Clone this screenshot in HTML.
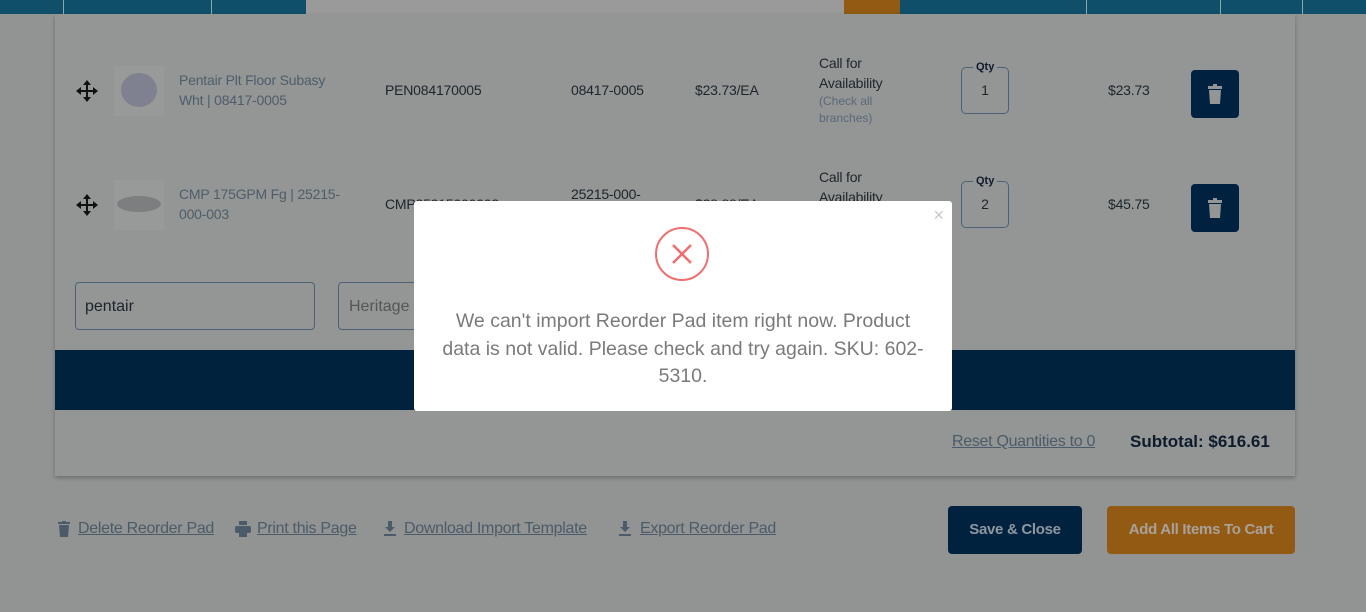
<!DOCTYPE html>
<html><head><meta charset="utf-8"><style>
*{box-sizing:border-box;margin:0;padding:0}
body{width:1366px;height:612px;overflow:hidden;background:#929493;font-family:"Liberation Sans",sans-serif;position:relative;color:#1f2a33}
.a{position:absolute}
.bar{top:0;height:14px}
.card{left:55px;top:14px;width:1240px;height:462px;background:#949695;box-shadow:0 2px 4px rgba(0,0,0,.25)}
.t{font-size:14px;color:#1c252c;letter-spacing:-.2px}
.lnk{font-size:14px;color:#4e5d6b;line-height:20px;letter-spacing:-.2px}
.sm{font-size:12px;color:#5a6878}
.qty{width:48px;height:47px;border:1px solid #4d6176;border-radius:5px;text-align:center;font-size:14px;line-height:44px;color:#1c252c}
.qty span{position:absolute;top:-8px;left:11px;background:#949695;padding:0 3px;font-size:11px;font-weight:bold;line-height:14px;color:#0d1b2b}
.del{width:48px;height:48px;background:#002240;border-radius:4px}
.thumb{width:50px;height:50px;background:#989a99}
.ul{text-decoration:underline;color:#4c5b69;font-size:16px;letter-spacing:-.3px}
</style></head><body>
<div class="a bar" style="left:0;width:306px;background:#0f4f6a"></div>
<div class="a bar" style="left:63px;width:1px;background:#8aa"></div>
<div class="a bar" style="left:211px;width:1px;background:#8aa"></div>
<div class="a bar" style="left:306px;width:538px;background:#9a9a9a"></div>
<div class="a bar" style="left:844px;width:56px;background:#935a14"></div>
<div class="a bar" style="left:900px;width:466px;background:#0f4f6a"></div>
<div class="a bar" style="left:1086px;width:1px;background:#8aa"></div>
<div class="a bar" style="left:1220px;width:1px;background:#8aa"></div>
<div class="a bar" style="left:1302px;width:1px;background:#8aa"></div>

<div class="a card"></div>

<svg class="a" style="left:76px;top:80px" width="22" height="22" viewBox="0 0 22 22"><path d="M11 0l4 5h-3v5h5V7l5 4-5 4v-3h-5v5h3l-4 5-4-5h3v-5H5v3L0 11l5-4v3h5V5H7z" fill="#111"/></svg>
<div class="a thumb" style="left:114px;top:66px"><div class="a" style="left:7px;top:7px;width:36px;height:34px;border-radius:50%;background:#7f8090"></div></div>
<div class="a lnk" style="left:179px;top:70px">Pentair Plt Floor Subasy<br>Wht | 08417-0005</div>
<div class="a t" style="left:385px;top:82px">PEN084170005</div>
<div class="a t" style="left:571px;top:82px">08417-0005</div>
<div class="a t" style="left:695px;top:82px">$23.73/EA</div>
<div class="a t" style="left:819px;top:53px;line-height:20px">Call for<br>Availability</div>
<div class="a sm" style="left:819px;top:93px;line-height:17px">(Check all<br>branches)</div>
<div class="a qty" style="left:961px;top:67px"><span>Qty</span>1</div>
<div class="a t" style="left:1108px;top:82px">$23.73</div>
<div class="a del" style="left:1191px;top:70px"><svg class="a" style="left:17px;top:14px" width="14" height="20" viewBox="0 0 14 20"><rect x="0" y="2" width="14" height="3" fill="#949695"/><rect x="5" y="0" width="4" height="3" fill="#949695"/><path d="M1 6h12l-1 14H2z" fill="#949695"/></svg></div>

<svg class="a" style="left:76px;top:194px" width="22" height="22" viewBox="0 0 22 22"><path d="M11 0l4 5h-3v5h5V7l5 4-5 4v-3h-5v5h3l-4 5-4-5h3v-5H5v3L0 11l5-4v3h5V5H7z" fill="#111"/></svg>
<div class="a thumb" style="left:114px;top:180px"><div class="a" style="left:3px;top:16px;width:44px;height:16px;border-radius:50%;background:#7d7e80"></div></div>
<div class="a lnk" style="left:179px;top:184px">CMP 175GPM Fg | 25215-<br>000-003</div>
<div class="a t" style="left:385px;top:196px">CMP25215000003</div>
<div class="a t" style="left:571px;top:186px">25215-000-</div>
<div class="a t" style="left:695px;top:196px">$28.88/EA</div>
<div class="a t" style="left:819px;top:167px;line-height:20px">Call for<br>Availability</div>
<div class="a qty" style="left:961px;top:181px"><span>Qty</span>2</div>
<div class="a t" style="left:1108px;top:196px">$45.75</div>
<div class="a del" style="left:1191px;top:184px"><svg class="a" style="left:17px;top:14px" width="14" height="20" viewBox="0 0 14 20"><rect x="0" y="2" width="14" height="3" fill="#949695"/><rect x="5" y="0" width="4" height="3" fill="#949695"/><path d="M1 6h12l-1 14H2z" fill="#949695"/></svg></div>

<div class="a" style="left:75px;top:282px;width:240px;height:48px;border:1px solid #4d6176;border-radius:4px;font-size:16px;padding:15px 9px;color:#1c252c">pentair</div>
<div class="a" style="left:338px;top:282px;width:120px;height:48px;border:1px solid #4d6176;border-radius:4px;font-size:16px;padding:15px 10px;color:#555">Heritage</div>

<div class="a" style="left:55px;top:350px;width:1240px;height:60px;background:#00223d"></div>

<div class="a ul" style="left:952px;top:433px">Reset Quantities to 0</div>
<div class="a" style="left:1130px;top:432px;font-size:17px;font-weight:bold;color:#0d1b2b">Subtotal: $616.61</div>

<svg class="a" style="left:58px;top:521px" width="12" height="16" viewBox="0 0 12 16"><rect y="1" width="12" height="2" fill="#4c5b69"/><rect x="4" width="4" height="2" fill="#4c5b69"/><path d="M1 4h10l-1 12H2z" fill="#4c5b69"/></svg>
<div class="a ul" style="left:78px;top:520px">Delete Reorder Pad</div>
<svg class="a" style="left:235px;top:521px" width="16" height="16" viewBox="0 0 16 16"><rect x="4" y="0" width="8" height="4" fill="#4c5b69"/><rect x="0" y="5" width="16" height="7" rx="2" fill="#4c5b69"/><rect x="4" y="10" width="8" height="6" fill="#4c5b69"/></svg>
<div class="a ul" style="left:257px;top:520px">Print this Page</div>
<svg class="a" style="left:384px;top:521px" width="12" height="15" viewBox="0 0 12 15"><path d="M4 0h4v6h3l-5 5-5-5h3z M0 13h12v2H0z" fill="#4c5b69"/></svg>
<div class="a ul" style="left:404px;top:520px">Download Import Template</div>
<svg class="a" style="left:619px;top:521px" width="12" height="15" viewBox="0 0 12 15"><path d="M4 0h4v6h3l-5 5-5-5h3z M0 13h12v2H0z" fill="#4c5b69"/></svg>
<div class="a ul" style="left:640px;top:520px">Export Reorder Pad</div>

<div class="a" style="left:948px;top:506px;width:134px;height:48px;background:#00223f;border-radius:4px;color:#8d97a0;font-weight:bold;font-size:15px;text-align:center;line-height:48px;letter-spacing:-.3px">Save &amp; Close</div>
<div class="a" style="left:1107px;top:506px;width:188px;height:48px;background:#935a14;border-radius:4px;color:#a8a29a;font-weight:bold;font-size:15px;text-align:center;line-height:48px;letter-spacing:-.3px">Add All Items To Cart</div>

<div class="a" style="left:414px;top:201px;width:538px;height:210px;background:#fff;border-radius:3px">
  <div class="a" style="right:8px;top:4px;font-size:18px;color:#c8c8c8">×</div>
  <svg class="a" style="left:240px;top:25px" width="56" height="56" viewBox="0 0 56 56"><circle cx="28" cy="28" r="26" fill="none" stroke="#ef6e6e" stroke-width="2"/><path d="M19 19L37 37M37 19L19 37" stroke="#ef6e6e" stroke-width="2.5"/></svg>
  <div class="a" style="left:0;top:107px;width:538px;text-align:center;font-size:19.5px;line-height:27.5px;color:#7a7a7a;padding:0 22px">We can't import Reorder Pad item right now. Product data is not valid. Please check and try again. SKU: 602-5310.</div>
</div>
</body></html>
